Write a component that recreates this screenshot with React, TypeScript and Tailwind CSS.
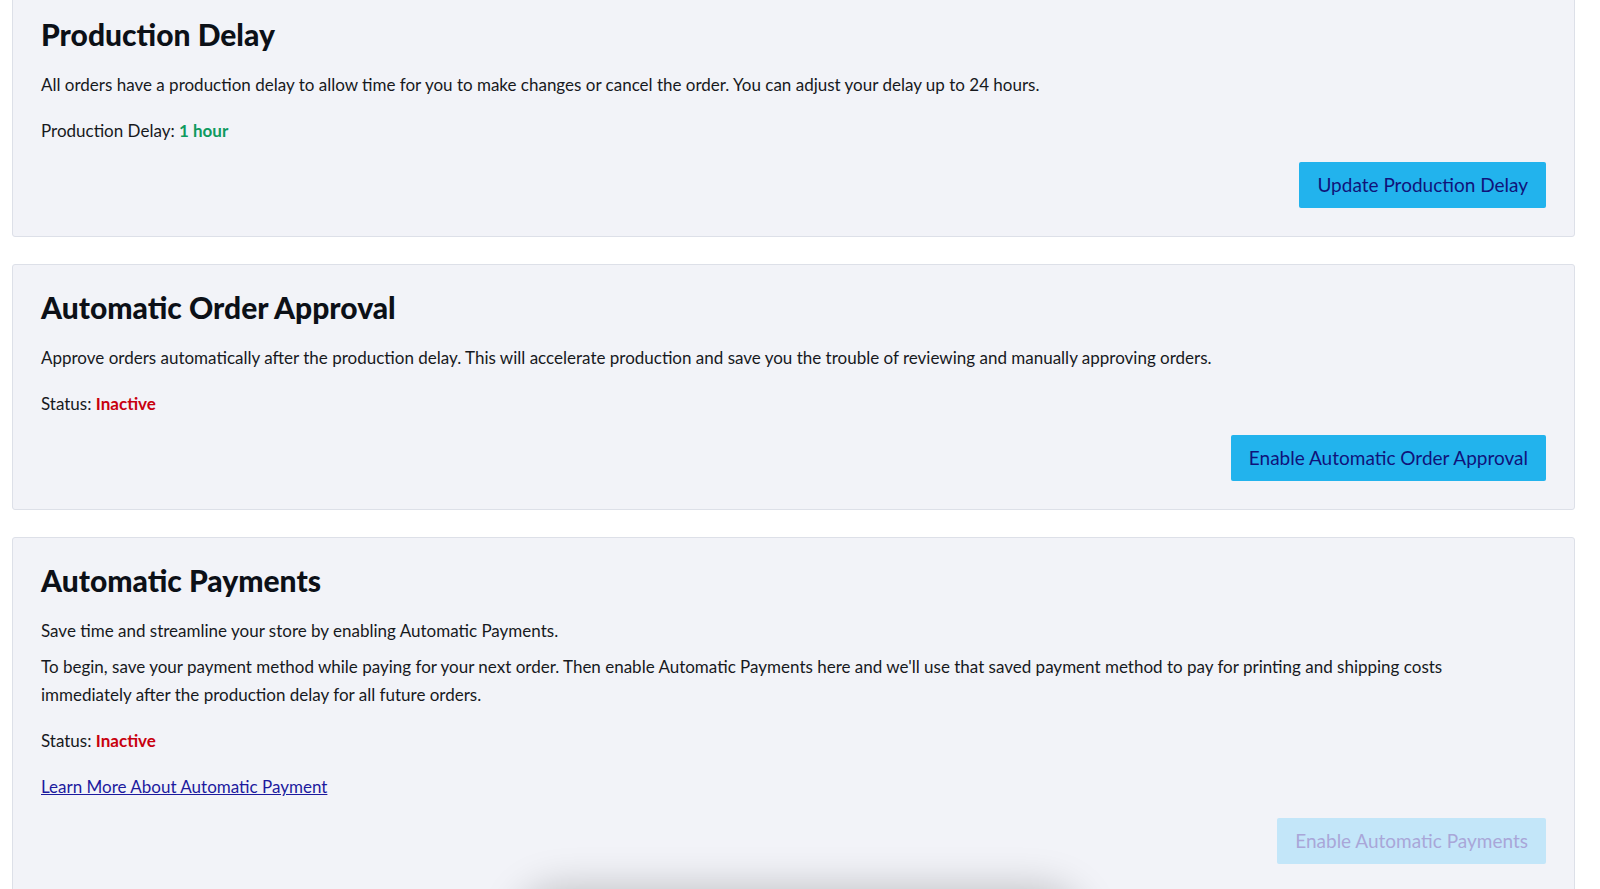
import React from "react";

function Card({ title, children, button, disabled }: { title: string; children: React.ReactNode; button: string; disabled?: boolean }) {
  return (
    <section className="rounded-[3px] border border-[#dde0e8] bg-[#f2f3f8] px-7 pt-7 pb-7">
      <h2 className="text-[30px] leading-7 font-black text-[#0c1017]">{title}</h2>
      <div className="mt-[23px] flex flex-col gap-[18px] text-[17px] leading-7 text-[#17191d]">{children}</div>
      <div className="mt-[17px] flex justify-end">
        <button
          className={
            disabled
              ? "h-[46px] rounded-[2px] bg-[#c3e6f9] px-[18px] text-[19px] text-[#a9a6d8]"
              : "h-[46px] rounded-[2px] bg-[#22b3ed] px-[18px] text-[19px] text-[#10137a]"
          }
        >
          {button}
        </button>
      </div>
    </section>
  );
}

export default function App() {
  return (
    <div className="relative min-h-[889px] overflow-hidden bg-white font-['Lato',sans-serif]">
      <div className="-mt-[9px] flex flex-col gap-[27px] pl-3 pr-[25px]">
        <Card title="Production Delay" button="Update Production Delay">
          <p>
            All orders have a production delay to allow time for you to make changes or cancel the order. You can adjust your delay up to 24 hours.
          </p>
          <p>
            Production Delay: <span className="font-bold text-[#0f9a5f]">1 hour</span>
          </p>
        </Card>
        <Card title="Automatic Order Approval" button="Enable Automatic Order Approval">
          <p>
            Approve orders automatically after the production delay. This will accelerate production and save you the trouble of reviewing and manually approving orders.
          </p>
          <p>
            Status: <span className="font-bold text-[#c8000f]">Inactive</span>
          </p>
        </Card>
        <Card title="Automatic Payments" button="Enable Automatic Payments" disabled>
          <div className="flex flex-col gap-[8px]">
            <p>Save time and streamline your store by enabling Automatic Payments.</p>
            <p className="max-w-[1460px]">
              To begin, save your payment method while paying for your next order. Then enable Automatic Payments here and we'll use that saved payment method to pay for printing and shipping costs immediately after the production delay for all future orders.
            </p>
          </div>
          <p>
            Status: <span className="font-bold text-[#c8000f]">Inactive</span>
          </p>
          <p>
            <a href="#" className="text-[#1c1a9e] underline">Learn More About Automatic Payment</a>
          </p>
        </Card>
      </div>
      <div className="pointer-events-none absolute left-[530px] top-[900px] h-[60px] w-[540px] rounded-[30px] bg-white shadow-[0_0_40px_12px_rgba(0,0,0,0.22)]" />
    </div>
  );
}
